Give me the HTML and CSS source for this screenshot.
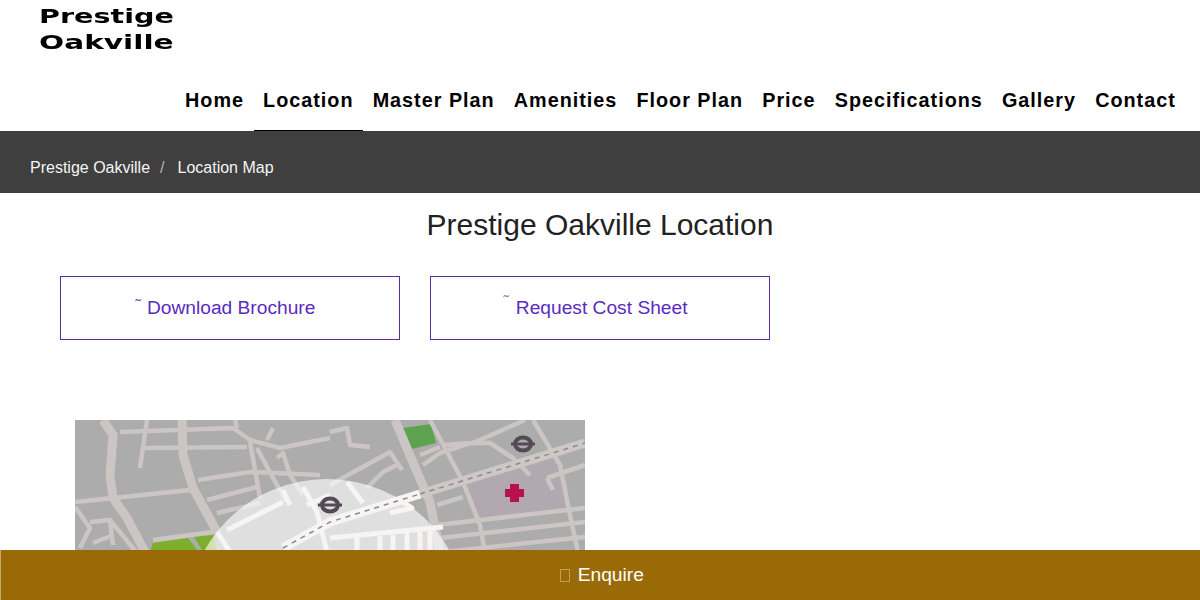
FILE: index.html
```html
<!DOCTYPE html>
<html lang="en">
<head>
<meta charset="utf-8">
<title>Prestige Oakville Location</title>
<link rel="stylesheet" href="styles.css">
</head>
<body>
<header class="site-header">
  <a class="logo" href="#"><span class="logo-line">Prestige</span><span class="logo-line logo-line-two">Oakville</span></a>
  <nav class="main-nav">
    <a href="#">Home</a>
    <a href="#" class="active">Location</a>
    <a href="#">Master Plan</a>
    <a href="#">Amenities</a>
    <a href="#">Floor Plan</a>
    <a href="#">Price</a>
    <a href="#">Specifications</a>
    <a href="#">Gallery</a>
    <a href="#">Contact</a>
  </nav>
</header>
<div class="crumbs">
  <a href="#">Prestige Oakville</a><span class="crumb-sep">/</span><a href="#">Location Map</a>
</div>
<main>
  <h1 class="page-title">Prestige Oakville Location</h1>
  <div class="cta-row">
    <a class="cta" href="#"><span class="cta-icon">˜</span>Download Brochure</a>
    <a class="cta" href="#"><span class="cta-icon cta-icon-high">˜</span>Request Cost Sheet</a>
  </div>
  <div class="map-wrap">
    <svg class="map" viewBox="0 0 510 180" width="510" height="180" role="img" aria-label="Location map">
      <rect class="m-bg" width="510" height="180"/>
      <polygon class="m-zone" points="390,63 482,38 492,87 405,98"/>
      <polygon class="m-park" points="328,8 356,4 361,23 337,29"/>
      <polygon class="m-lime" points="78,123 113,118 124,132 74,134"/>
      <polygon class="m-lime" points="119,117 138,115 142,132 128,132"/>
      <g class="m-road r3">
        <path d="M45 12L158 8L175 20L205 28L255 18"/>
        <path d="M72 0L65 48"/>
        <path d="M70 28L172 27"/>
        <path d="M160 0L162 8M198 8L192 20"/>
        <path d="M0 82L115 70"/>
        <path d="M123 60L175 52L245 55"/>
        <path d="M132 80L182 67"/>
        <path d="M142 93L185 83"/>
        <path d="M175 22L185 78"/>
        <path d="M182 28L198 58L212 82"/>
        <path d="M202 38L208 33L215 55L228 75"/>
        <path d="M0 87L15 108L5 128"/>
        <path d="M15 102L35 100L38 125M18 123L38 115M35 100L62 133"/>
        <path d="M78 120L138 112"/>
        <path d="M255 12L272 8L275 25L295 27"/>
        <path d="M255 65L315 32L327 50"/>
        <path d="M292 68L308 52L322 45"/>
        <path d="M368 25L398 23L450 0"/>
        <path d="M397 23L415 23L438 38L455 55"/>
        <path d="M472 58L478 70M472 58L510 45"/>
        <path d="M362 105L510 88"/>
        <path d="M365 118L510 102"/>
        <path d="M368 132L510 117"/>
        <path d="M362 85L388 77"/>
        <path d="M348 45L365 33L395 23"/>
        <path d="M345 35L365 27"/>
        <path d="M355 0L388 62L405 105L410 132"/>
        <path d="M458 0L485 45L495 95L503 132"/>
      </g>
      <g class="m-road r7">
        <path d="M28 0L38 15L35 55L38 78L52 98L70 132"/>
        <path d="M107 0L108 35L118 68L142 112"/>
        <path d="M320 0L342 52L355 82L365 132"/>
      </g>
      <path class="m-rail" d="M345 74L510 23"/>
      <path class="m-rail-dash" d="M345 74L510 23"/>
      <circle class="m-glow" cx="252" cy="200" r="141"/>
      <g class="m-road r4 m-white">
        <path d="M142 112L155 132"/>
        <path d="M152 110L208 82"/>
        <path d="M208 70L215 85M228 67L242 92L252 132"/>
        <path d="M232 85L255 75"/>
        <path d="M272 62L288 83"/>
        <path d="M315 93L337 88L328 82"/>
        <path d="M255 118L368 107"/>
        <path d="M282 118V132M305 116V132M318 115V132M332 113V132M345 112V132M355 111V132"/>
      </g>
      <path class="m-rail m-rail-white" d="M208 128L255 102L345 74"/>
      <path class="m-rail-dash" d="M208 128L255 102L345 74"/>
      <g transform="translate(448 24)">
        <ellipse class="m-ring" rx="8" ry="6.5"/><rect class="m-tube" x="-12" y="-1.5" width="24" height="3"/>
      </g>
      <g transform="translate(255 85)">
        <ellipse class="m-ring" rx="8" ry="6.5"/><rect class="m-tube" x="-12" y="-1.5" width="24" height="3"/>
      </g>
      <path class="m-cross" d="M435 65h9v5h5v8h-5v5h-9v-5h-5v-8h5z" transform="translate(0 -1)"/>
    </svg>
  </div>
</main>
<a class="enquire-bar" href="#"><span class="tofu"></span>Enquire</a>
</body>
</html>
```
FILE: styles.css
```css
* { box-sizing: border-box; }
html, body { margin: 0; padding: 0; }
body {
  font-family: "Liberation Sans", Arial, sans-serif;
  background: #fff;
  color: #222;
}
a { text-decoration: none; color: inherit; }

.site-header {
  height: 131px;
  display: flex;
  flex-direction: column;
  justify-content: space-between;
}
.logo {
  display: flex;
  flex-direction: column;
  width: 140px;
  margin-left: 39px;
  padding-top: 3px;
  color: #000;
  font-family: "DejaVu Sans", sans-serif;
  font-weight: 700;
  font-size: 20px;
  line-height: 26px;
}
.logo-line {
  display: block;
  white-space: nowrap;
  transform-origin: left center;
  transform: scaleX(1.43);
}
.logo-line-two { transform: scaleX(1.48); }
.main-nav {
  display: flex;
  justify-content: flex-end;
  padding-right: 14.7px;
  font-size: 19.8px;
  font-weight: 700;
  letter-spacing: 1px;
  color: #000;
}
.main-nav a {
  padding: 0 9.55px 18px;
  line-height: 24px;
  border-bottom: 1px solid transparent;
}
.main-nav a.active { border-bottom-color: #000; }

.crumbs {
  height: 62px;
  background: #3f3f3f;
  color: #f4f4f4;
  padding: 11px 30px 0;
  display: flex;
  align-items: center;
  font-size: 16px;
}
.crumb-sep {
  color: #b5b5b5;
  padding: 0 13px 0 10px;
}

.page-title {
  margin: 0;
  padding-top: 14px;
  text-align: center;
  font-size: 30px;
  line-height: 36px;
  font-weight: 400;
  color: #222;
}
.cta-row {
  display: flex;
  gap: 30px;
  padding: 33px 0 0 60px;
}
.cta {
  width: 340px;
  height: 64px;
  border: 1px solid #5a2ca0;
  color: #5b2bc0;
  font-size: 19.2px;
  padding-right: 9px;
  display: flex;
  align-items: center;
  justify-content: center;
}
.cta-icon {
  font-size: 16px;
  line-height: 14px;
  color: #6a50b0;
  margin-right: 6px;
  margin-top: -4px;
}
.cta-icon-high { margin-top: -12px; color: #888; margin-right: 7px; }

.map-wrap { padding: 80px 0 0 75px; }
.map { display: block; filter: blur(0.5px); }
.m-bg { fill: #acacac; }
.m-zone { fill: #b2a8af; }
.m-park { fill: #5da24f; }
.m-lime { fill: #7eaf2c; }
.m-road { fill: none; stroke: #cbc6c4; stroke-linejoin: round; }
.r3 { stroke-width: 4.5px; }
.r4 { stroke-width: 5px; }
.r7 { stroke-width: 9px; }
.m-white { stroke: #f7f5f3; }
.m-rail { fill: none; stroke: #cdc8c6; stroke-width: 9px; }
.m-rail-white { stroke: #f7f5f3; }
.m-rail-dash { fill: none; stroke: #8e8a8a; stroke-width: 1.5px; stroke-dasharray: 5 5; }
.m-glow { fill: #fff; fill-opacity: 0.62; }
.m-ring { fill: none; stroke: #544a55; stroke-width: 4px; }
.m-tube { fill: #544a55; }
.m-cross { fill: #b8124e; }

.enquire-bar {
  position: fixed;
  left: 0;
  right: 0;
  bottom: 0;
  height: 50px;
  background: #9a6a06;
  border-left: 1px solid #c2a869;
  color: #fff;
  font-size: 19.2px;
  padding-left: 3px;
  display: flex;
  align-items: center;
  justify-content: center;
}
.tofu {
  width: 10px;
  height: 13px;
  border: 1px solid #c0a050;
  margin-right: 7.5px;
}
```
